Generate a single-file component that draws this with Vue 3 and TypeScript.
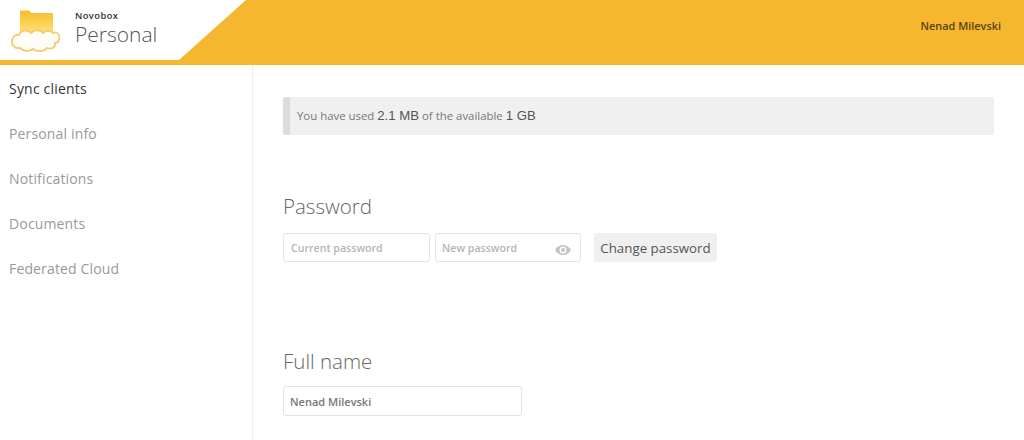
<script setup lang="ts">
const navItems: string[] = ['Sync clients', 'Personal info', 'Notifications', 'Documents', 'Federated Cloud']
</script>

<template>
  <div class="page">
    <header class="header">
      <div class="brand">
        <svg class="logo" width="50" height="44" viewBox="0 0 50 44">
          <defs>
            <linearGradient id="folder" x1="0" y1="0" x2="0" y2="1">
              <stop offset="0" stop-color="#f6bc2c" />
              <stop offset="1" stop-color="#fee87e" />
            </linearGradient>
          </defs>
          <path d="M10 26V1.500Q10 0.500 11 0.500H19L21.500 3H42Q43 3 43 4V26Z" fill="url(#folder)" />
          <path d="M10 38C5 39 1 35 2 30C3 26 6 24 9 25C11 20 18 19 21 23C25 19 31 20 33 23C36 20 41 20 43 23C47 21 50 25 49 29C49 32 47 33 45 33C46 37 42 40 37 38C34 42 26 42 23 39C19 42 13 41 10 38Z" fill="#fffdf6" stroke="#f3cb70" stroke-width="1.800" />
        </svg>
        <div class="brand-text">
          <div class="company">Novobox</div>
          <div class="section">Personal</div>
        </div>
      </div>
      <div class="user">Nenad Milevski</div>
    </header>
    <div class="body">
      <nav class="side">
        <a v-for="(item, i) in navItems" :key="item" class="nav-item" :class="{ active: i === 0 }">{{ item }}</a>
      </nav>
      <main class="main">
        <div class="quota">You have used <strong>2.1 MB</strong> of the available <strong>1 GB</strong></div>
        <section class="pw">
          <h2>Password</h2>
          <div class="row">
            <input class="field" type="text" placeholder="Current password" />
            <div class="new-wrap">
              <input class="field" type="text" placeholder="New password" />
              <svg class="eye" width="16" height="10" viewBox="0 0 16 10">
                <path fill-rule="evenodd" d="M8 0C4.500 0 1.500 2 0 5C1.500 8 4.500 10 8 10C11.500 10 14.500 8 16 5C14.500 2 11.500 0 8 0ZM8 1.500A3.500 3.500 0 1 1 8 8.500A3.500 3.500 0 1 1 8 1.500Z" fill="#c4c4c4" />
                <circle cx="8" cy="5" r="2" fill="#c4c4c4" />
              </svg>
            </div>
            <button class="btn" type="button">Change password</button>
          </div>
        </section>
        <section class="fn">
          <h2>Full name</h2>
          <input class="field wide" type="text" value="Nenad Milevski" />
        </section>
      </main>
    </div>
  </div>
</template>

<style>
html, body { margin: 0; background: #fff; overflow: hidden; }
</style>

<style scoped>
.page {
  width: 1024px;
  height: 440px;
  overflow: hidden;
  font-family: "Open Sans", "Noto Sans", sans-serif;
  color: #555;
  background: #fff;
}
.header {
  height: 65px;
  background: #f4b72f;
  display: flex;
  align-items: flex-start;
  justify-content: space-between;
}
.brand {
  width: 246px;
  height: 60px;
  background: #fff;
  clip-path: polygon(0 0, 100% 0, 179px 100%, 0 100%);
  display: flex;
  align-items: flex-start;
  box-sizing: border-box;
  padding: 10px 0 0 10px;
}
.logo { flex: none; }
.brand-text { margin-left: 15px; }
.company {
  font-size: 9.400px;
  line-height: 12px;
  color: #333;
  letter-spacing: 0.4px;
  font-weight: 600;
}
.section {
  font-size: 21px;
  line-height: 24px;
  margin-top: 0;
  font-weight: 300;
  color: #555;
}
.user {
  font-size: 10.900px;
  font-weight: 600;
  color: #5c3f12;
  line-height: 14px;
  padding: 19px 23px 0 0;
}
.body {
  display: flex;
  height: 375px;
}
.side {
  width: 252px;
  flex: none;
  box-sizing: content-box;
  border-right: 1px solid #eee;
  display: flex;
  flex-direction: column;
  padding-top: 1px;
}
.nav-item {
  height: 45px;
  line-height: 46px;
  padding-left: 9px;
  font-size: 14px;
  letter-spacing: 0.15px;
  color: #999;
}
.nav-item.active { color: #333; letter-spacing: 0.2px; }
.main {
  flex: 1;
  padding: 32px 30px 0 30px;
  min-width: 0;
}
.quota {
  height: 38px;
  line-height: 38px;
  background: #f0f0f0;
  border-left: 7px solid #dcdcdc;
  border-radius: 2px;
  padding-left: 7px;
  font-size: 11.400px;
  color: #777;
}
.quota strong {
  font-weight: 400;
  font-size: 13.200px;
  color: #555;
  font-family: "Liberation Sans", sans-serif;
}
h2 {
  margin: 0;
  font-size: 20.500px;
  line-height: 28px;
  font-weight: 300;
  color: #666;
}
.pw { margin-top: 57px; }
.row {
  margin-top: 13px;
  display: flex;
  align-items: flex-start;
}
.field {
  display: block;
  box-sizing: border-box;
  width: 147px;
  height: 29px;
  border: 1px solid #e4e4e4;
  border-radius: 3px;
  padding: 0 7px;
  font-family: inherit;
  font-size: 10.600px;
  background: #fff;
  color: #777;
  font-weight: 600;
  outline: none;
}
.field::placeholder { color: #b5b5b5; opacity: 1; font-weight: 600; }
.new-wrap { position: relative; margin-left: 5px; }
.new-wrap .field { width: 146px; padding: 0 6px; }
.eye { position: absolute; right: 10px; top: 12px; }
.btn {
  margin-left: 13px;
  width: 123px;
  height: 29px;
  border: 0;
  border-radius: 3px;
  background: #f0f0f0;
  color: #555;
  font-family: inherit;
  font-size: 13.300px;
  font-weight: 400;
  padding: 0;
}
.fn { margin-top: 85px; }
.fn .field { margin-top: 11px; }
.wide { width: 239px; height: 30px; padding: 0 6px; font-size: 11px; }
</style>
